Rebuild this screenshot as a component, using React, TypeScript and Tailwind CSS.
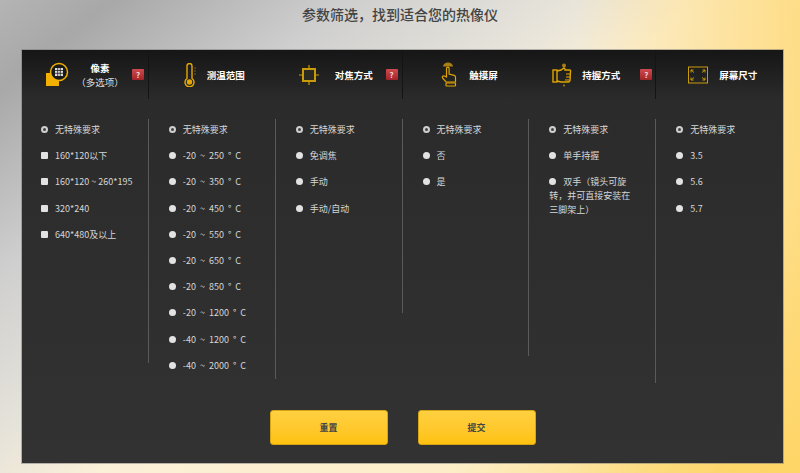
import React from "react";

const font = { fontFamily: '"Noto Sans CJK SC", "Liberation Sans", sans-serif' };

const PixelIcon = () => (
  <svg width="26" height="26" viewBox="0 0 26 26">
    <rect x="1" y="11" width="13" height="13" fill="#f2b100" />
    <circle cx="14" cy="10" r="8.500" fill="#1a1a1a" stroke="#f2b100" strokeWidth="1.500" />
    <path d="M10 6h8v8h-8z" fill="#ddd" />
    <path d="M10 8.500h8M10 11.300h8M12.700 6v8M15.300 6v8" stroke="#222" strokeWidth="0.800" />
  </svg>
);

const ThermoIcon = () => (
  <svg width="14" height="24" viewBox="0 0 14 24" fill="none" stroke="#e6a800" strokeWidth="1.400">
    <path d="M4 3a2.500 2.500 0 0 1 5 0v12.500a4.500 4.500 0 1 1-5 0z" />
    <circle cx="6.500" cy="19" r="2" fill="#e6a800" />
    <path d="M11 5h2M11 8h2M11 11h2" strokeWidth="0.800" opacity="0.600" />
  </svg>
);

const FocusIcon = () => (
  <svg width="22" height="22" viewBox="0 0 22 22" fill="none" stroke="#c99a0a">
    <rect x="5" y="5" width="12" height="12" strokeWidth="2" fill="#2a2a22" />
    <path d="M11 1v4M11 17v4M1 11h4M17 11h4" strokeWidth="1.200" />
  </svg>
);

const TouchIcon = () => (
  <svg width="16" height="25" viewBox="0 0 16 25" fill="none" stroke="#e0a500" strokeWidth="1.200">
    <path d="M2 4.500a5 4 0 0 1 10 0z" fill="#a87f12" stroke="none" />
    <path d="M5.500 15V6.500a1.300 1.300 0 0 1 2.600 0V12l5 1.400a2 2 0 0 1 1.400 2V20H5l-3.500-4a1.500 1.500 0 0 1 2-2z" />
    <rect x="5" y="21" width="9.500" height="3" rx="0.500" />
  </svg>
);

const FistIcon = () => (
  <svg width="20" height="24" viewBox="0 0 20 24" fill="none" stroke="#e0a500" strokeWidth="1.400">
    <circle cx="12" cy="2.500" r="2" fill="#a87f12" stroke="none" />
    <rect x="1" y="7" width="4" height="12" />
    <path d="M5 8l4-1 3-2 1 1v1h4.500a1 1 0 0 1 1 1.500l-.5 9a2 2 0 0 1-2 1.500H9l-4-1" />
    <path d="M14 11h4.500M14 14h4M13 17h4" strokeWidth="1" />
    <circle cx="12" cy="22.500" r="1" fill="#a87f12" stroke="none" />
  </svg>
);

const ExpandIcon = () => (
  <svg width="20" height="18" viewBox="0 0 20 18" fill="none" stroke="#c99a0a">
    <rect x="0.500" y="1" width="19" height="16" />
    <path d="M3 4l3 2.500M3 4v2.500M3 4h2.500M17 4l-3 2.500M17 4v2.500M17 4h-2.500M3 14l3-2.500M3 14v-2.500M3 14h2.500M17 14l-3-2.500M17 14v-2.500M17 14h-2.500" strokeWidth="1" />
  </svg>
);

const HelpBadge = () => (
  <span className="flex h-[11px] w-[12px] shrink-0 items-center justify-center rounded-[1px] bg-gradient-to-b from-[#cf4a50] to-[#a32329] text-[8px] font-bold leading-none text-[#f3d5d5]">
    ?
  </span>
);

const filters = [
  {
    title: "像素",
    sub: "（多选项）",
    icon: <PixelIcon />,
    help: true,
    head: "pl-[23px] gap-[11px] border-r border-[#141414]",
    labelWidth: "w-[36px]",
    badgeGap: "ml-[3px]",
    body: "pl-[19px] h-[244px] border-r border-[#5a5a5a]",
    square: true,
    options: ["160*120以下", "160*120 ~ 260*195", "320*240", "640*480及以上"],
  },
  {
    title: "测温范围",
    icon: <ThermoIcon />,
    head: "pl-[34px] gap-[10px]",
    labelWidth: "w-[38px]",
    body: "pl-[20px] h-[260px] border-r border-[#5a5a5a] [word-spacing:2px]",
    options: [
      "-20 ~ 250 ° C",
      "-20 ~ 350 ° C",
      "-20 ~ 450 ° C",
      "-20 ~ 550 ° C",
      "-20 ~ 650 ° C",
      "-20 ~ 850 ° C",
      "-20 ~ 1200 ° C",
      "-40 ~ 1200 ° C",
      "-40 ~ 2000 ° C",
    ],
  },
  {
    title: "对焦方式",
    icon: <FocusIcon />,
    help: true,
    head: "pl-[22px] gap-[15px] border-r border-[#141414]",
    labelWidth: "w-[38px]",
    badgeGap: "-ml-[2px]",
    body: "pl-[20px] h-[194px] border-r border-[#5a5a5a]",
    options: ["免调焦", "手动", "手动/自动"],
  },
  {
    title: "触摸屏",
    icon: <TouchIcon />,
    head: "pl-[38px] gap-[12px]",
    labelWidth: "w-[30px]",
    body: "pl-[20px] h-[237px] border-r border-[#5a5a5a]",
    options: ["否", "是"],
  },
  {
    title: "持握方式",
    icon: <FistIcon />,
    help: true,
    head: "pl-[23px] gap-[10px] border-r border-[#141414]",
    labelWidth: "w-[38px]",
    badgeGap: "ml-[10px]",
    body: "pl-[20px] pr-[22px] h-[264px] border-r border-[#5a5a5a]",
    options: ["单手持握", "双手（镜头可旋转，并可直接安装在三脚架上）"],
  },
  {
    title: "屏幕尺寸",
    icon: <ExpandIcon />,
    head: "pl-[32px] gap-[11px]",
    labelWidth: "w-[38px]",
    body: "pl-[20px]",
    options: ["3.5", "5.6", "5.7"],
  },
];

const Option = ({
  label,
  checked,
  square,
}: {
  label: string;
  checked?: boolean;
  square?: boolean;
}) => (
  <li className="text-[9px] leading-[14px] text-[#d6d6d6]">
    {checked ? (
      <span className="mr-[7px] inline-block h-[7px] w-[7px] rounded-full border-2 border-[#cfcfcf] bg-[#444]" />
    ) : (
      <span
        className={`mr-[7px] inline-block h-[7px] w-[7px] bg-[#e2e2e2] ${
          square ? "rounded-[1px]" : "rounded-full"
        }`}
      />
    )}
    {label}
  </li>
);

export default function App() {
  return (
    <div
      style={font}
      className="flex h-[473px] w-[800px] flex-col overflow-hidden bg-[linear-gradient(90deg,transparent_72%,rgba(255,215,110,0.75)_100%),linear-gradient(142deg,#b4b4b4_0%,#a8a8a8_8%,#cfcfcf_25%,#e6e3da_40%,#fbf0d8_50%,#fdeec8_75%,#fcd050_100%)]"
    >
      <h1 className="flex h-[50px] shrink-0 items-center justify-center pb-[22px] text-[14px] font-medium text-[#444]">
        参数筛选，找到适合您的热像仪
      </h1>

      <div className="mx-[22px] flex h-[413px] w-[761px] flex-col bg-gradient-to-b from-[#2a2a2a] to-[#323232] shadow-[0_0_0_1px_rgba(120,120,120,0.5)]">
        <div className="grid h-[49px] grid-cols-6 bg-gradient-to-b from-[#161616] to-[#2b2b2b]">
          {filters.map((f) => (
            <div key={f.title} className={`flex items-center ${f.head}`}>
              <div className="flex h-[26px] shrink-0 items-center">{f.icon}</div>
              <div className={`shrink-0 text-center text-[9.500px] leading-[14px] text-white ${f.labelWidth}`}>
                <div className="whitespace-nowrap font-bold">{f.title}</div>
                {f.sub && <div className="-ml-[8px] w-[52px] whitespace-nowrap text-[#ddd]">{f.sub}</div>}
              </div>
              {f.help && (
                <div className={f.badgeGap}>
                  <HelpBadge />
                </div>
              )}
            </div>
          ))}
        </div>

        <div className="grid grid-cols-6 items-start pt-[20px]">
          {filters.map((f) => (
            <ul key={f.title} className={`flex flex-col gap-[12.2px] pt-[4px] ${f.body}`}>
              <Option label="无特殊要求" checked />
              {f.options.map((o) => (
                <Option key={o} label={o} square={f.square} />
              ))}
            </ul>
          ))}
        </div>

        <div className="mt-auto flex justify-center gap-[30px] pb-[18px]">
          <button className="h-[35px] w-[118px] rounded-[3px] border border-[#d8a512] bg-gradient-to-b from-[#ffd040] to-[#ffc20e] text-[9px] font-bold text-[#444]">
            重置
          </button>
          <button className="h-[35px] w-[118px] rounded-[3px] border border-[#d8a512] bg-gradient-to-b from-[#ffd040] to-[#ffc20e] text-[9px] font-bold text-[#444]">
            提交
          </button>
        </div>
      </div>
    </div>
  );
}
